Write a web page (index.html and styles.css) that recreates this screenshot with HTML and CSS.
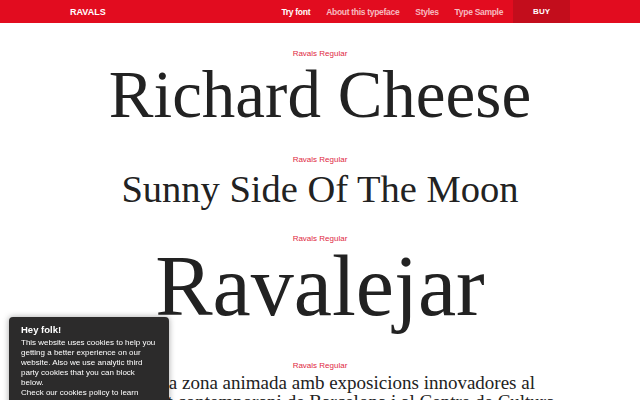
FILE: index.html
```html
<!DOCTYPE html>
<html lang="ca">
<head>
<meta charset="utf-8">
<title>Ravals</title>
<link rel="stylesheet" href="styles.css">
</head>
<body>
<header class="topbar">
  <div class="topbar-inner">
    <a class="brand" href="#">RAVALS</a>
    <nav class="nav">
      <a class="nav-link is-active" href="#">Try font</a>
      <a class="nav-link" href="#">About this typeface</a>
      <a class="nav-link" href="#">Styles</a>
      <a class="nav-link" href="#">Type Sample</a>
      <a class="nav-buy" href="#">BUY</a>
    </nav>
  </div>
</header>

<main class="specimens">
  <section class="specimen">
    <p class="label">Ravals Regular</p>
    <p class="sample sample-l">Richard Cheese</p>
  </section>
  <section class="specimen">
    <p class="label">Ravals Regular</p>
    <p class="sample sample-m">Sunny Side Of The Moon</p>
  </section>
  <section class="specimen">
    <p class="label">Ravals Regular</p>
    <p class="sample sample-xl">Ravalejar</p>
  </section>
  <section class="specimen">
    <p class="label">Ravals Regular</p>
    <p class="sample sample-text">Visiteu la zona animada amb exposicions innovadores al museu d'art contemporani de Barcelona i al Centre de Cultura Contemporània.</p>
  </section>
</main>

<aside class="cookies">
  <h2 class="cookies-title">Hey folk!</h2>
  <p class="cookies-text">This website uses cookies to help you getting a better experience on our website. Also we use analytic third party cookies that you can block below.</p>
  <p class="cookies-text">Check our cookies policy to learn more about it.</p>
</aside>
</body>
</html>
```

FILE: styles.css
```css
* {
  box-sizing: border-box;
}

html, body {
  margin: 0;
  padding: 0;
  background: #ffffff;
}

body {
  font-family: "Liberation Serif", "Times New Roman", serif;
  color: #222222;
  height: 400px;
  overflow: hidden;
}

/* top navigation bar */
.topbar {
  background: #e20c1f;
  height: 23px;
}

.topbar-inner {
  max-width: 500px;
  height: 100%;
  margin: 0 auto;
  display: flex;
  align-items: stretch;
  justify-content: space-between;
}

.brand {
  display: flex;
  align-items: center;
  font-family: "Liberation Sans", Arial, sans-serif;
  font-weight: bold;
  font-size: 9px;
  color: #ffffff;
  text-decoration: none;
}

.nav {
  display: flex;
  align-items: stretch;
}

.nav-link,
.nav-buy {
  display: flex;
  align-items: center;
  font-family: "Liberation Sans", Arial, sans-serif;
  font-weight: bold;
  font-size: 8.5px;
  letter-spacing: -0.3px;
  text-decoration: none;
}

.nav-link {
  padding: 0 8px;
  color: rgba(255, 255, 255, 0.72);
}

.nav-link.is-active {
  color: #ffffff;
}

.nav-buy {
  margin-left: 2px;
  padding: 0 20px;
  background: #c30d1c;
  color: #ffffff;
  font-size: 8px;
  letter-spacing: 0;
}

/* type specimens */
.specimens {
  padding-top: 26px;
  text-align: center;
}

.label {
  margin: 0;
  font-family: "Liberation Sans", Arial, sans-serif;
  font-size: 8px;
  line-height: 10px;
  color: #e0283f;
}

.sample {
  margin: 0;
  font-weight: normal;
  white-space: nowrap;
}

.sample-l {
  font-size: 67px;
  line-height: 66px;
  margin: 2px 0 28px;
}

.sample-m {
  font-size: 38.5px;
  line-height: 38px;
  margin: 5px 0 26px;
}

.sample-xl {
  font-size: 86px;
  line-height: 86px;
  margin: -1px 0 32px;
}

.sample-text {
  font-size: 19px;
  line-height: 19px;
  margin: 2px auto 0;
  max-width: 476px;
  white-space: normal;
}

/* cookie notice */
.cookies {
  position: fixed;
  left: 9px;
  top: 317px;
  width: 160px;
  padding: 7px 12px 12px;
  background: #2c2b2b;
  border-radius: 4px;
  box-shadow: 0 0 6px rgba(0, 0, 0, 0.35);
  color: #ffffff;
  font-family: "Liberation Sans", Arial, sans-serif;
}

.cookies-title {
  margin: 0 0 2px;
  font-size: 9.5px;
  line-height: 12px;
  font-weight: bold;
}

.cookies-text {
  margin: 0;
  font-size: 8px;
  line-height: 10px;
}
```
